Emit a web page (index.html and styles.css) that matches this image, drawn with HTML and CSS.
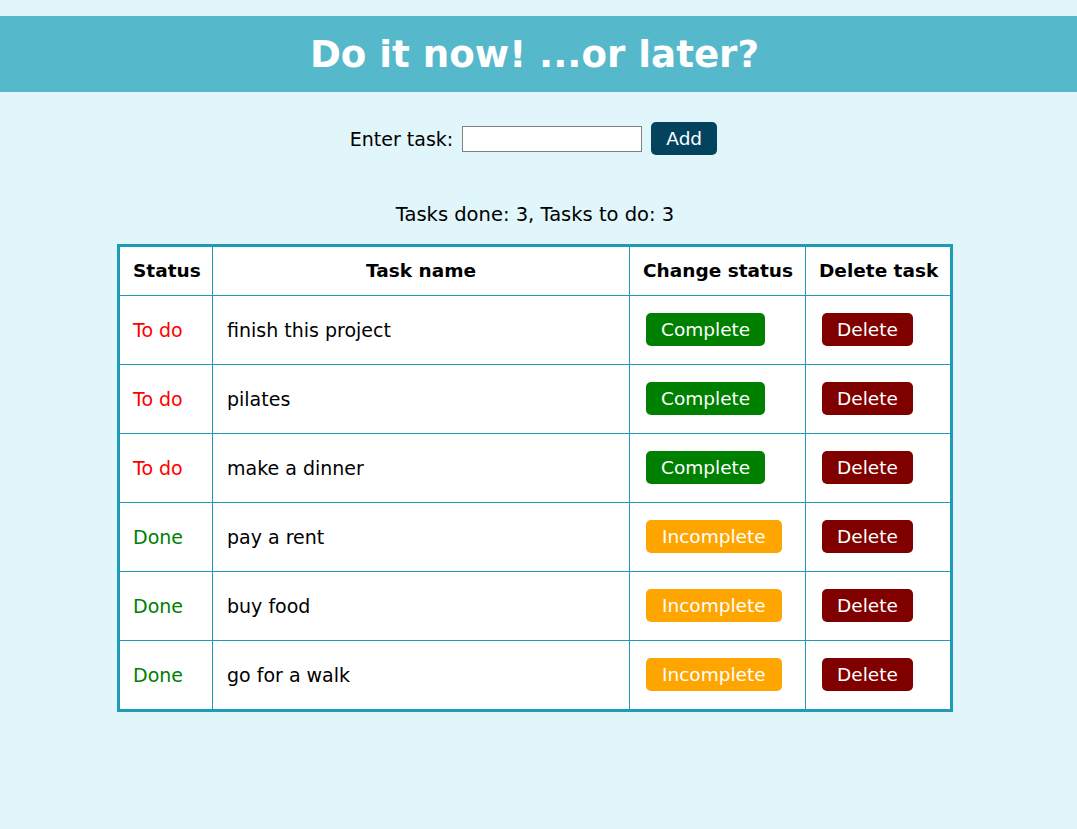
FILE: index.html
```html
<!DOCTYPE html>
<html>
<head>
<meta charset="utf-8">
<title>Do it now</title>
<link rel="stylesheet" href="styles.css">
</head>
<body>
<header class="banner"><h1 class="title">Do it now! ...or later?</h1></header>
<main class="content">
  <form class="task-form">
    <label class="task-label" for="task">Enter task:</label>
    <input class="task-input" id="task" type="text">
    <button class="btn btn-add" type="button">Add</button>
  </form>
  <p class="summary">Tasks done: 3, Tasks to do: 3</p>
  <table class="tasks">
    <colgroup>
      <col class="col-status"><col class="col-name"><col class="col-change"><col class="col-delete">
    </colgroup>
    <thead>
      <tr><th>Status</th><th>Task name</th><th>Change status</th><th>Delete task</th></tr>
    </thead>
    <tbody>
      <tr><td class="todo">To do</td><td class="name">finish this project</td><td class="action"><button class="btn btn-complete">Complete</button></td><td class="action"><button class="btn btn-delete">Delete</button></td></tr>
      <tr><td class="todo">To do</td><td class="name">pilates</td><td class="action"><button class="btn btn-complete">Complete</button></td><td class="action"><button class="btn btn-delete">Delete</button></td></tr>
      <tr><td class="todo">To do</td><td class="name">make a dinner</td><td class="action"><button class="btn btn-complete">Complete</button></td><td class="action"><button class="btn btn-delete">Delete</button></td></tr>
      <tr><td class="done">Done</td><td class="name">pay a rent</td><td class="action"><button class="btn btn-incomplete">Incomplete</button></td><td class="action"><button class="btn btn-delete">Delete</button></td></tr>
      <tr><td class="done">Done</td><td class="name">buy food</td><td class="action"><button class="btn btn-incomplete">Incomplete</button></td><td class="action"><button class="btn btn-delete">Delete</button></td></tr>
      <tr><td class="done">Done</td><td class="name">go for a walk</td><td class="action"><button class="btn btn-incomplete">Incomplete</button></td><td class="action"><button class="btn btn-delete">Delete</button></td></tr>
    </tbody>
  </table>
</main>
</body>
</html>
```
FILE: styles.css
```css
html, body {
  margin: 0;
  padding: 0;
  background: #e0f6fb;
  font-family: "DejaVu Sans", Verdana, sans-serif;
  font-size: 19px;
  color: #000;
}
.banner {
  margin-top: 16px;
  background: #55b8cb;
  height: 76px;
  padding-right: 8px;
  display: flex;
  align-items: center;
  justify-content: center;
}
.title {
  margin: 0;
  color: #fff;
  font-size: 37.2px;
  font-weight: bold;
  font-family: "DejaVu Sans", sans-serif;
}
.content {
  display: flex;
  flex-direction: column;
  align-items: center;
  padding-right: 7px;
}
.task-form {
  margin: 30px 0 0 -3px;
  display: flex;
  align-items: center;
  height: 33px;
}
.task-label { margin-right: 9px; }
.task-input {
  width: 180px;
  height: 26px;
  box-sizing: border-box;
  border: 1px solid #808080;
  background: #fff;
  margin: 0 9px 0 0;
  padding: 0 4px;
}
.btn {
  font-family: "DejaVu Sans", Verdana, sans-serif;
  font-size: 18.5px;
  color: #fff;
  border: none;
  border-radius: 5px;
  height: 33px;
  padding: 0 15px;
  cursor: pointer;
}
.btn-add { background: #03435e; width: 66px; padding: 0; }
.btn-complete { background: #008000; }
.btn-incomplete { background: #ffa500; padding: 0 16px; }
.btn-delete { background: #800000; }
.summary {
  margin: 49px 0 0;
  font-size: 19.5px;
  line-height: 22px;
  height: 22px;
}
.tasks {
  margin: 18px 0 0;
  width: 833px;
  table-layout: fixed;
  border-collapse: collapse;
  border: 3px solid #1e9bb5;
  background: #fff;
}
.tasks th, .tasks td {
  border: 1px solid #1e9bb5;
  padding: 0 13px;
  text-align: left;
  line-height: 22px;
  white-space: nowrap;
}
.tasks th {
  height: 48px;
  text-align: center;
  font-weight: bold;
  font-size: 18.5px;
}
.tasks td { height: 68px; }
.tasks td.name { padding: 0 14px; }
.tasks td.action { padding: 0 16px 2px; height: 66px; }
.col-status { width: 94px; }
.col-name { width: 417px; }
.col-change { width: 176px; }
.col-delete { width: 146px; }
.todo { color: #ff0000; }
.done { color: #008000; }
```
